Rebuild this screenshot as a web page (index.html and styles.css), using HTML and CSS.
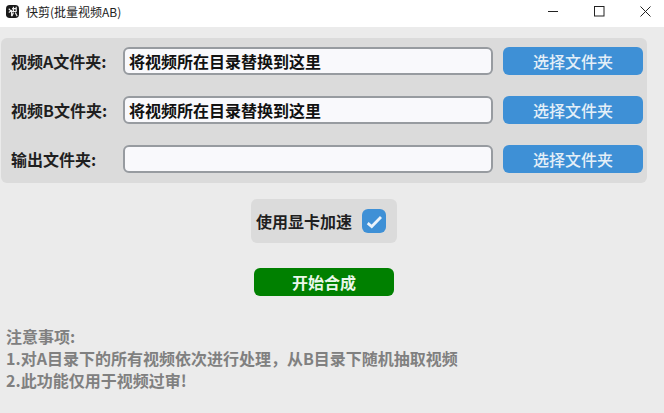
FILE: index.html
```html
<!DOCTYPE html>
<html lang="zh">
<head>
<meta charset="utf-8">
<title>快剪(批量视频AB)</title>
<link rel="stylesheet" href="styles.css">
</head>
<body>
<div class="app">
  <header class="titlebar">
    <div class="title-left">
      <svg class="logo" width="13" height="13" viewBox="0 0 14 14"><rect x="0" y="0" width="14" height="14" rx="4" fill="#1a1a1a"/><path d="M3 4l2 2M3 8l3-2v6M6.500 4h5M8 2v5M11 2v5M6.500 7h5M8 8l-1.500 4M10 8l2 4" stroke="#eee" stroke-width="1.300" fill="none"/></svg>
      <span class="title-text">快剪(批量视频AB)</span>
    </div>
    <div class="win-controls">
      <svg width="11" height="11" viewBox="0 0 11 11"><path d="M0 5.500h10" stroke="#222" stroke-width="1"/></svg>
      <svg width="11" height="11" viewBox="0 0 11 11"><rect x="0.500" y="0.500" width="9.500" height="9.500" fill="none" stroke="#222" stroke-width="1"/></svg>
      <svg width="11" height="11" viewBox="0 0 11 11"><path d="M0.500 0.500l10 10M10.500 0.500l-10 10" stroke="#222" stroke-width="1"/></svg>
    </div>
  </header>
  <main class="content">
    <section class="panel">
      <div class="row">
        <span class="label">视频A文件夹:</span>
        <div class="input">将视频所在目录替换到这里</div>
        <button class="pick">选择文件夹</button>
      </div>
      <div class="row">
        <span class="label">视频B文件夹:</span>
        <div class="input">将视频所在目录替换到这里</div>
        <button class="pick">选择文件夹</button>
      </div>
      <div class="row">
        <span class="label">输出文件夹:</span>
        <div class="input"></div>
        <button class="pick">选择文件夹</button>
      </div>
    </section>
    <div class="gpu-wrap">
      <div class="gpu">
        <span>使用显卡加速</span>
        <span class="check"><svg width="24" height="24" viewBox="0 0 24 24"><path d="M5.700 14.200l4 3.300 9.300-9.500" fill="none" stroke="#eaf3fb" stroke-width="2.800"/></svg></span>
      </div>
    </div>
    <div class="start-wrap"><button class="start">开始合成</button></div>
    <div class="notes">
      <p>注意事项:</p>
      <p>1.对A目录下的所有视频依次进行处理，从B目录下随机抽取视频</p>
      <p>2.此功能仅用于视频过审!</p>
    </div>
  </main>
</div>
</body>
</html>
```
FILE: styles.css
```css
* { box-sizing: border-box; }
html, body { margin: 0; padding: 0; }
body { width: 664px; height: 413px; overflow: hidden; background: #ebebeb; font-family: "Noto Sans CJK SC", "Liberation Sans", sans-serif; }
.app { display: flex; flex-direction: column; height: 413px; }
.titlebar { height: 27px; background: #fff; display: flex; justify-content: space-between; align-items: center; padding: 0 0 4px 6px; flex: none; }
.title-left { display: flex; align-items: center; gap: 7px; }
.logo { display: block; }
.title-text { font-size: 12px; color: #222; }
.win-controls { display: flex; gap: 35px; padding-right: 13px; }
.win-controls svg { display: block; }
.content { flex: 1; padding: 11px 17px 0 1px; display: flex; flex-direction: column; }
.panel { background: #dbdbdb; border-radius: 6px; height: 145px; padding: 9px 4px 0 10px; display: flex; flex-direction: column; gap: 21px; }
.row { display: flex; align-items: center; height: 28px; }
.label { width: 113px; flex: none; font-size: 16px; font-weight: 700; color: #1f1f1f; line-height: 20px; margin-right: -1px; }
.input { width: 370px; height: 28px; flex: none; background: #f9f9fc; border: 2px solid #979ba0; border-radius: 6px; padding-left: 4px; font-size: 16px; font-weight: 700; color: #111; line-height: 24px; }
.pick { margin-left: 10px; width: 140px; height: 28px; border: 0; border-radius: 6px; background: #3e90d6; color: #e4eff8; font: 500 16px "Noto Sans CJK SC", sans-serif; padding: 0; }
.gpu-wrap { display: flex; justify-content: center; margin-top: 16px; }
.gpu { width: 146px; height: 44px; background: #dbdbdb; border-radius: 6px; display: flex; align-items: center; padding-left: 5px; gap: 10px; font-size: 16px; font-weight: 700; color: #1f1f1f; }
.check { width: 24px; height: 24px; background: #3e90d6; border-radius: 6px; display: block; }
.check svg { display: block; }
.start-wrap { display: flex; justify-content: center; margin-top: 25px; }
.start { width: 140px; height: 28px; border: 0; border-radius: 6px; background: #008000; color: #eaf7ea; font: 700 16px "Noto Sans CJK SC", sans-serif; padding: 0; }
.notes { margin-top: 29px; padding-left: 5px; font-size: 16px; font-weight: 700; color: #808080; line-height: 22px; }
.notes p { margin: 0; }
```
